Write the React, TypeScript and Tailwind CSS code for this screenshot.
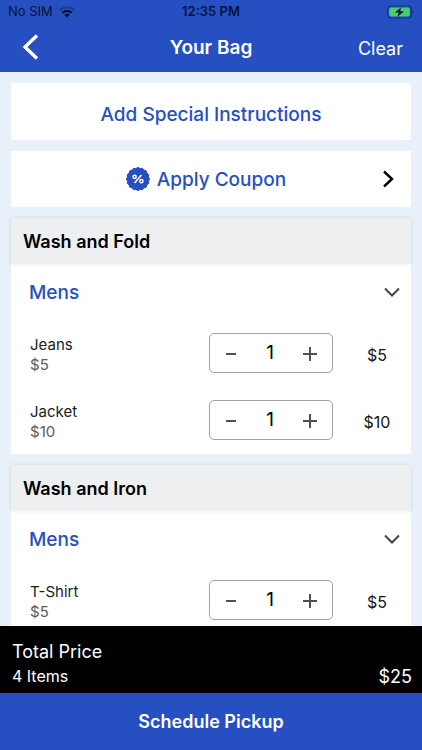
import React from 'react';

type Item = { name: string; price: number; quantity: number };
type Service = { title: string; group: string; items: Item[] };

const services: Service[] = [
  {
    title: 'Wash and Fold',
    group: 'Mens',
    items: [
      { name: 'Jeans', price: 5, quantity: 1 },
      { name: 'Jacket', price: 10, quantity: 1 },
    ],
  },
  {
    title: 'Wash and Iron',
    group: 'Mens',
    items: [{ name: 'T-Shirt', price: 5, quantity: 1 }],
  },
];

function StatusBar() {
  return (
    <div className="grid h-6 grid-cols-3 items-center px-2 text-[13px] text-[#08133c]">
      <div className="flex items-center gap-1.5">
        <span>No SIM</span>
        <svg width="16" height="12" viewBox="0 0 16 12" fill="none" aria-hidden="true">
          <path d="M1 4.2a10 10 0 0 1 14 0" stroke="#1b3b9b" strokeWidth="2" />
          <path d="M3.4 6.8a6.6 6.6 0 0 1 9.2 0" stroke="#050b22" strokeWidth="2" />
          <path d="M5.4 8.9a3.8 3.8 0 0 1 5.2 0L8 11.6z" fill="#050b22" />
        </svg>
      </div>
      <span className="text-center font-semibold">12:35 PM</span>
      <svg className="justify-self-end" width="27" height="14" viewBox="0 0 27 14" aria-hidden="true">
        <rect x="0.7" y="1" width="23.6" height="12" rx="3.4" fill="none" stroke="#163184" strokeWidth="1.2" />
        <rect x="2.2" y="2.4" width="20.6" height="9.2" rx="2" fill="#43d070" />
        <path d="M25.4 5v4c.9-.3 1.3-1.1 1.3-2s-.4-1.7-1.3-2z" fill="#163184" />
        <path d="M14.2 2.2 7.9 7.6h3.9l-1.4 4.4 6.6-5.8h-3.900z" fill="#06103a" />
      </svg>
    </div>
  );
}

function Stepper({ item }: { item: Item }) {
  return (
    <div className="flex h-10 w-[124px] items-center rounded-[5px] border border-[#a3a3a3] text-black">
      <button type="button" aria-label={`Remove one ${item.name}`} className="flex h-full w-[42px] items-center justify-center">
        <svg width="16" height="16" viewBox="0 0 16 16" stroke="#505050" strokeWidth="2" aria-hidden="true">
          <path d="M3 9h10" />
        </svg>
      </button>
      <span className="flex-1 text-center text-[19px] leading-6">{item.quantity}</span>
      <button type="button" aria-label={`Add one ${item.name}`} className="flex h-full w-[44px] items-center justify-center">
        <svg width="16" height="16" viewBox="0 0 16 16" stroke="#505050" strokeWidth="2" aria-hidden="true">
          <path d="M1 9h14M8 2v14" />
        </svg>
      </button>
    </div>
  );
}

function ServiceSection({ service }: { service: Service }) {
  return (
    <section className="bg-white">
      <h2 className="flex h-[46px] items-center bg-[#eeeff1] px-3 text-[18px] font-semibold text-black shadow-[0_0_4px_rgba(0,0,0,0.1)]">
        {service.title}
      </h2>
      <button type="button" className="flex h-14 w-full items-center justify-between pr-[11px] pl-[18px]">
        <span className="pt-0.5 text-[19px] font-medium text-[#264fc2]">{service.group}</span>
        <svg width="16" height="10" viewBox="0 0 16 10" fill="none" stroke="#444" strokeWidth="2" aria-hidden="true">
          <path d="m1 1.5 7 7 7-7" />
        </svg>
      </button>
      <ul>
        {service.items.map((item) => (
          <li key={item.name} className="flex h-[67px] items-center pb-px">
            <div className="flex-1 pt-[3px] pl-[19px] text-[15px] leading-5">
              <p className="text-[#1c1c1c]">{item.name}</p>
              <p className="text-[#5c5c5c]">${item.price}</p>
            </div>
            <Stepper item={item} />
            <span className="ml-[10px] w-[68px] pt-[3px] text-center text-[16px] text-[#151515]">
              ${item.price * item.quantity}
            </span>
          </li>
        ))}
      </ul>
    </section>
  );
}

const badgePoints = Array.from({ length: 32 }, (_, i) => {
  const radius = i % 2 === 0 ? 11.6 : 10.6;
  const angle = (i * Math.PI) / 16;
  return `${12 + radius * Math.cos(angle)},${12 + radius * Math.sin(angle)}`;
}).join(' ');

export default function App() {
  return (
    <div className="flex h-screen flex-col bg-[#e8f0fa] font-[Inter,sans-serif]">
      <header className="h-[72px] shrink-0 bg-[#264fc2]">
        <StatusBar />
        <div className="grid h-12 grid-cols-3 items-center px-[19px] text-[18px] text-white">
          <button type="button" aria-label="Back" className="w-6 pb-0.5">
            <svg width="24" height="26" viewBox="0 0 24 26" fill="none" stroke="currentColor" strokeWidth="3.4" aria-hidden="true">
              <path d="M18 1.5 6 13l12 11.5" />
            </svg>
          </button>
          <h1 className="text-center text-[19px] font-semibold">Your Bag</h1>
          <button type="button" className="justify-self-end">Clear</button>
        </div>
      </header>

      <main className="flex min-h-0 flex-1 flex-col gap-[11px] overflow-y-auto px-[11px] py-[11px] [scrollbar-width:none] *:shrink-0">
        <button type="button" className="h-[57px] bg-white pt-2 text-[19px] font-medium text-[#264fc2]">
          Add Special Instructions
        </button>
        <button type="button" className="flex h-14 items-center bg-white pr-[17px] pl-[19px] text-[19px] font-medium text-[#264fc2]">
          <span className="flex flex-1 items-center justify-center gap-[7px]">
            <svg width="24" height="24" viewBox="0 0 24 24" fill="none" aria-hidden="true">
              <polygon points={badgePoints} fill="#264fc2" stroke="#264fc2" strokeLinejoin="round" />
              <circle cx="8.6" cy="9.8" r="1.6" stroke="white" strokeWidth="1.5" />
              <circle cx="15.4" cy="14.2" r="1.6" stroke="white" strokeWidth="1.5" />
              <path d="m15.4 8-6.800 8" stroke="white" strokeWidth="1.5" />
            </svg>
            <span className="pt-0.5">Apply Coupon</span>
          </span>
          <svg width="12" height="18" viewBox="0 0 12 18" fill="none" stroke="black" strokeWidth="2.4" aria-hidden="true">
            <path d="m2 1.5 8 7.5-8 7.5" />
          </svg>
        </button>
        {services.map((service) => (
          <ServiceSection key={service.title} service={service} />
        ))}
      </main>

      <footer className="shrink-0 text-white">
        <div className="flex h-[67px] items-end justify-between bg-black pr-[10px] pb-1 pl-3">
          <div className="pb-px">
            <p className="text-[18px] leading-6">Total Price</p>
            <p className="text-[16px] leading-6">4 Items</p>
          </div>
          <span className="text-[18px] leading-6">$25</span>
        </div>
        <button type="button" className="h-[57px] w-full bg-[#264fc2] text-[18px] font-semibold">
          Schedule Pickup
        </button>
      </footer>
    </div>
  );
}
